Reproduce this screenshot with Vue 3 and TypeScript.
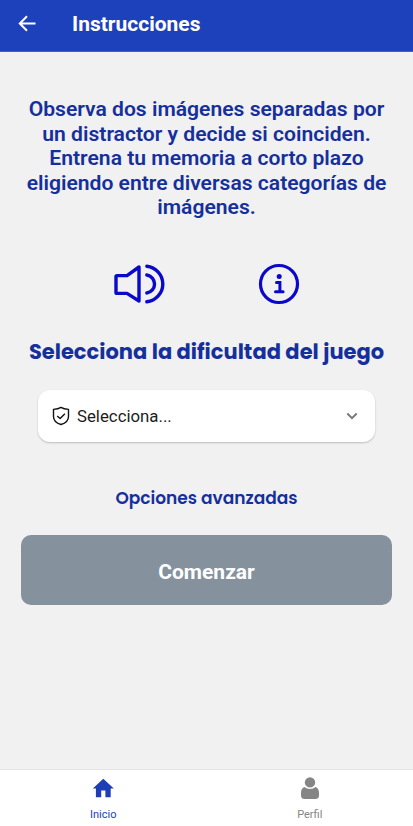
<script setup lang="ts">
import { ref } from 'vue'

interface Tab {
  id: string
  label: string
}

const tabs: Tab[] = [
  { id: 'home', label: 'Inicio' },
  { id: 'profile', label: 'Perfil' },
]
const activeTab = ref<string>('home')

const instructions: string[] = [
  'Observa dos imágenes separadas por',
  'un distractor y decide si coinciden.',
  'Entrena tu memoria a corto plazo',
  'eligiendo entre diversas categorías de',
  'imágenes.',
]
</script>

<template>
  <div class="screen">
    <header class="bar">
      <svg class="back" viewBox="0 0 18 18">
        <path d="M17.500 8.500H2M9 1.300 1.800 8.500 9 15.700" />
      </svg>
      <h1 class="title">Instrucciones</h1>
    </header>

    <main class="content">
      <p class="intro">
        <span v-for="line in instructions" :key="line" class="line">{{ line }}</span>
      </p>

      <div class="actions">
        <svg class="sound" viewBox="0 0 54 42">
          <path d="M4 12.600h10L26 4v34L14 30.400H4a1 1 0 0 1-1-1V13.600a1 1 0 0 1 1-1z" />
          <path d="M33.800 3.200a17.900 17.900 0 0 1 0 35.600M33.800 12a9.100 9.100 0 0 1 0 18" />
        </svg>
        <svg class="info" viewBox="0 0 42 42">
          <circle class="ring" cx="21" cy="21" r="18.500" />
          <circle class="dot" cx="21.200" cy="13.500" r="2.500" />
          <path class="stem" d="M18.500 19.400h3.400v8.800M17.500 28.700h7.600" />
        </svg>
      </div>

      <h2 class="subtitle">Selecciona la dificultad del juego</h2>

      <div class="select">
        <svg class="shield" viewBox="0 0 18 20">
          <path d="M9 1.400C6.700 2.800 4.200 3.200 1.500 3.400v7c0 4.200 2.700 6.600 7.500 8.100 4.800-1.500 7.500-3.900 7.500-8.100v-7C13.800 3.200 11.300 2.800 9 1.400z" />
          <path d="m5.200 9.900 2.900 2.700 4.800-4.900" />
        </svg>
        <span class="value">Selecciona...</span>
        <svg class="chevron" viewBox="0 0 12 8">
          <path d="m1.300 1.500 4.700 4.600 4.700-4.600" />
        </svg>
      </div>

      <div class="advanced">Opciones avanzadas</div>
      <button class="start" type="button">Comenzar</button>
    </main>

    <nav class="tabs">
      <div
        v-for="tab in tabs"
        :key="tab.id"
        class="tab"
        :class="{ active: tab.id === activeTab }"
        @click="activeTab = tab.id"
      >
        <svg v-if="tab.id === 'home'" class="glyph" viewBox="0 0 22 22">
          <path d="M11.300 1.800.8 11.600h3.100v8.600h5.300v-6.800h4.200v6.800h5.300v-8.600h3.100z" />
        </svg>
        <svg v-else class="glyph" viewBox="0 0 22 22">
          <circle cx="11" cy="5.400" r="5.200" />
          <path d="M5.600 9.900C3.300 10.300 2 12.800 2 16v2.400C2 20.600 3.500 22 5.500 22h11c2 0 3.500-1.400 3.500-3.600V16c0-3.200-1.300-5.700-3.600-6.100-1.400 1.300-3.300 2-5.400 2s-4-.7-5.400-2z" />
        </svg>
        <span class="label">{{ tab.label }}</span>
      </div>
    </nav>
  </div>
</template>

<style>
body {
  background: #f1f1f1;
}
</style>

<style scoped>
.screen {
  display: flex;
  flex-direction: column;
  height: 826px;
  overflow: hidden;
  background: #f1f1f1;
  font-family: Roboto, "Liberation Sans", sans-serif;
}
svg {
  display: block;
  flex: none;
}
.bar {
  display: flex;
  align-items: center;
  box-sizing: border-box;
  height: 52px;
  padding: 0 18px 4px;
  border-bottom: 1px solid #4561c4;
  background: #1d40bb;
}
.back {
  width: 18px;
  height: 18px;
  fill: none;
  stroke: #fff;
  stroke-width: 2;
}
.title {
  margin: 0 0 0 36px;
  color: #fff;
  font-size: 21px;
  font-weight: 700;
  line-height: 26px;
}
.content {
  display: flex;
  flex: 1;
  flex-direction: column;
  align-items: center;
}
.intro {
  margin: 45px 0 0;
  color: #152f9c;
  font-size: 21.100px;
  font-weight: 600;
  line-height: 24.500px;
  text-align: center;
}
.line {
  display: block;
  white-space: nowrap;
}
.actions {
  display: flex;
  gap: 91px;
  margin: 43px 0 0;
}
.sound {
  width: 54px;
  height: 42px;
  fill: none;
  stroke: #0b09c9;
  stroke-width: 3.400;
  stroke-linejoin: round;
  stroke-linecap: round;
}
.info {
  width: 42px;
  height: 42px;
  fill: none;
  stroke: #0b09c9;
}
.ring {
  stroke-width: 3.200;
}
.dot {
  fill: #0b09c9;
  stroke: none;
}
.stem {
  stroke-width: 3;
  stroke-linecap: round;
}
.subtitle {
  margin: 32px 0 0;
  color: #152f9c;
  font-family: Poppins, Inter, sans-serif;
  font-size: 21px;
  font-weight: 700;
  line-height: 30px;
  white-space: nowrap;
}
.select {
  display: flex;
  align-items: center;
  box-sizing: border-box;
  width: 337px;
  height: 52px;
  margin-top: 23px;
  padding: 0 17px 0 14px;
  border-radius: 12px;
  background: #fff;
  box-shadow: 0 1px 2px rgba(0, 0, 0, 0.22);
}
.shield {
  width: 18px;
  height: 20px;
  fill: none;
  stroke: #111;
  stroke-width: 1.400;
  stroke-linejoin: round;
}
.value {
  flex: 1;
  margin-left: 7px;
  color: #1c1c1c;
  font-size: 16.800px;
}
.chevron {
  width: 12px;
  height: 8px;
  fill: none;
  stroke: #777;
  stroke-width: 1.900;
}
.advanced {
  margin-top: 43px;
  color: #152f9c;
  font-family: Poppins, Inter, sans-serif;
  font-size: 17px;
  font-weight: 600;
  line-height: 26px;
}
.start {
  width: 371px;
  height: 70px;
  margin-top: 24px;
  padding: 4px 0 0;
  border: 0;
  border-radius: 10px;
  background: #85919d;
  color: #fff;
  font-family: inherit;
  font-size: 21px;
  font-weight: 700;
}
.tabs {
  display: flex;
  height: 56px;
  border-top: 1px solid #e3e3e3;
  background: #fff;
}
.tab {
  display: flex;
  flex: 1;
  flex-direction: column;
  align-items: center;
  padding-top: 7px;
  color: #858585;
}
.tab.active {
  color: #1d3eb5;
}
.glyph {
  width: 22px;
  height: 22px;
  fill: currentColor;
}
.label {
  margin-top: 9px;
  font-size: 11px;
  line-height: 13px;
}
</style>
